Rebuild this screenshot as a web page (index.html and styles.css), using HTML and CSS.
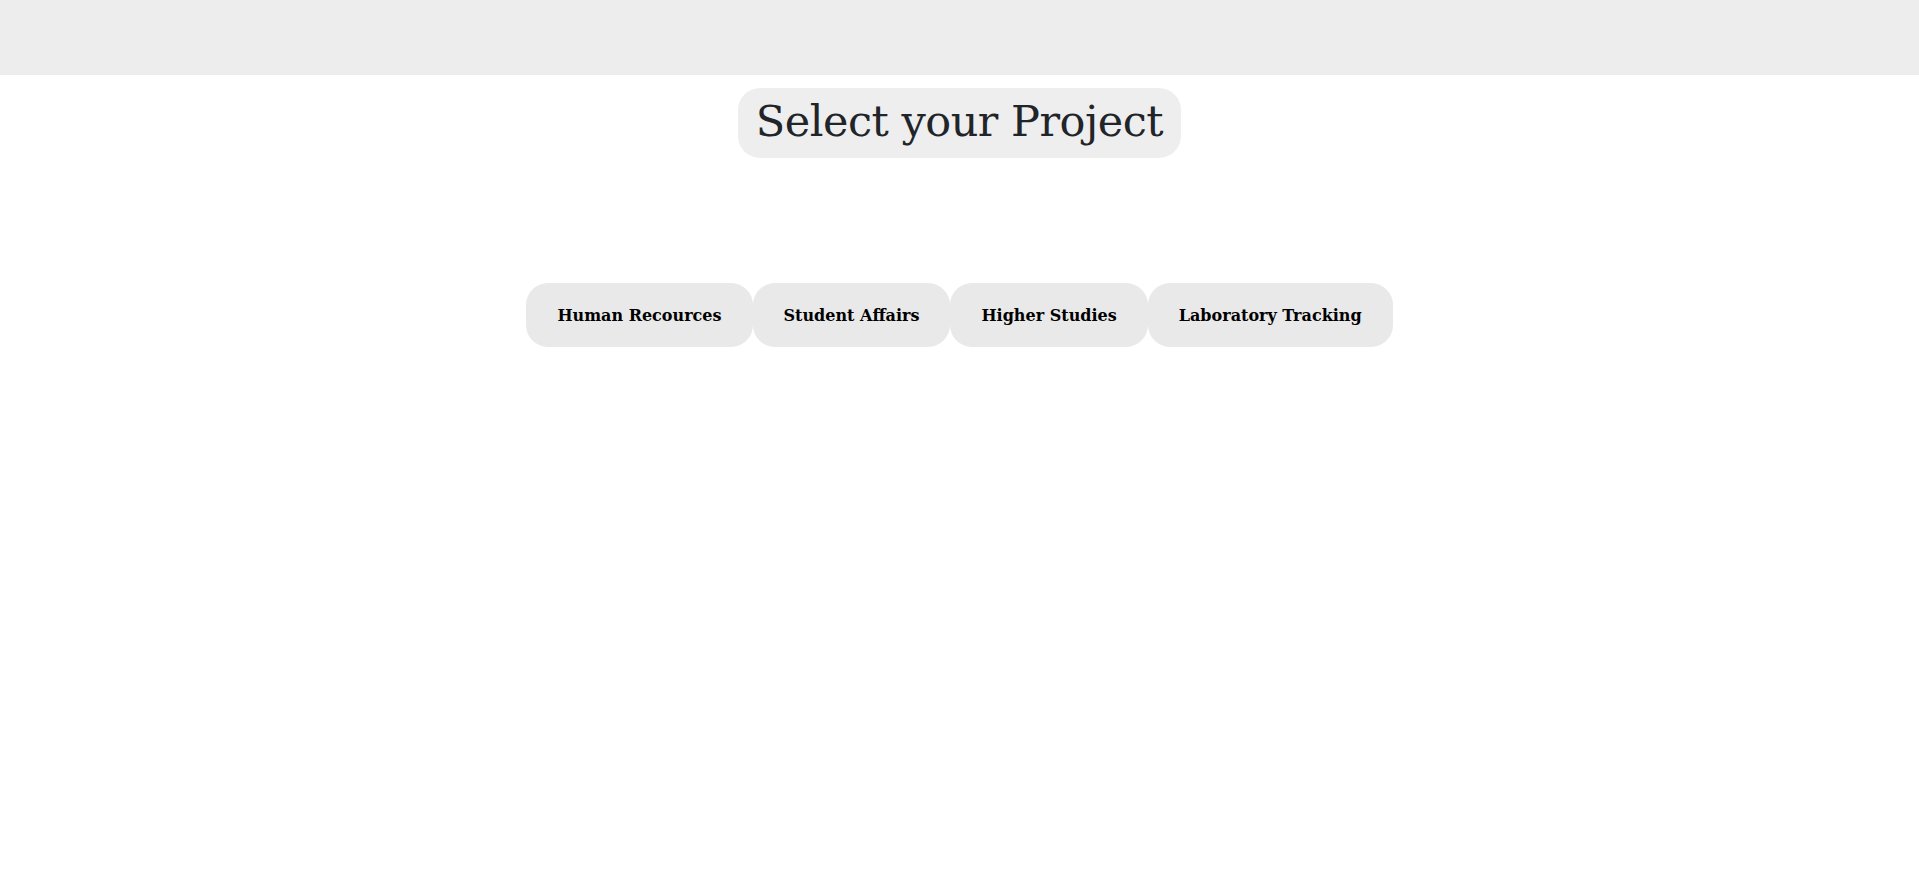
FILE: index.html
```html
<!DOCTYPE html>
<html>
<head>
<meta charset="utf-8">
<title>Select your Project</title>
<link rel="stylesheet" href="styles.css">
</head>
<body>
<header class="topbar"></header>
<main class="content">
  <h1 class="title">Select your Project</h1>
  <div class="projects">
    <button class="project">Human Recources</button>
    <button class="project">Student Affairs</button>
    <button class="project">Higher Studies</button>
    <button class="project">Laboratory Tracking</button>
  </div>
</main>
</body>
</html>
```

FILE: styles.css
```css
html, body {
  margin: 0;
  padding: 0;
  background: #ffffff;
}
body {
  font-family: "DejaVu Serif", serif;
}
.topbar {
  height: 75px;
  background: #ededed;
}
.content {
  display: flex;
  flex-direction: column;
  align-items: center;
}
.title {
  margin: 13px 0 0;
  height: 70px;
  box-sizing: border-box;
  padding: 0 18px 4px;
  display: flex;
  align-items: center;
  background: #eeeeee;
  border-radius: 22px;
  color: #212529;
  font-weight: 400;
  font-size: 43px;
  letter-spacing: -0.5px;
}
.projects {
  margin-top: 125px;
  display: flex;
}
.project {
  height: 64px;
  padding: 0 31px;
  border: none;
  border-radius: 22px;
  background: #e9e9e9;
  color: #000;
  font-family: "DejaVu Serif", serif;
  font-weight: 700;
  font-size: 16px;
  cursor: pointer;
}
```
